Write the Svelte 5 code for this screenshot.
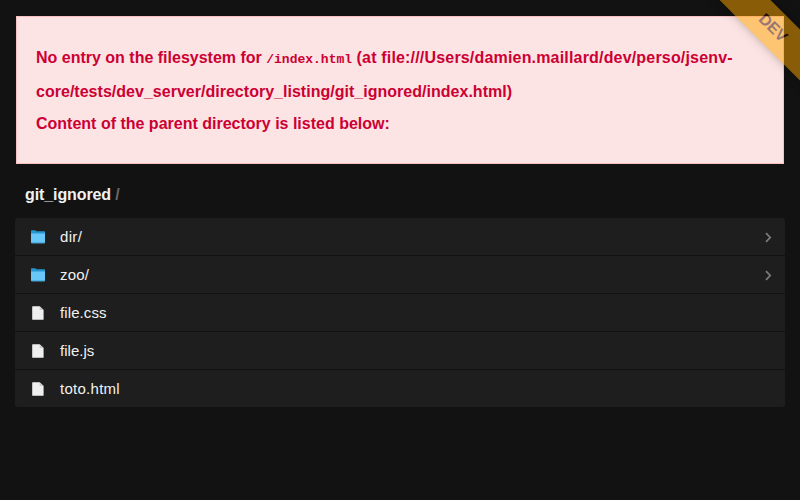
<script>
  const entries = [
    { name: 'dir/', dir: true, spacing: 0.35 },
    { name: 'zoo/', dir: true, spacing: 0.2 },
    { name: 'file.css', dir: false, spacing: 0.1 },
    { name: 'file.js', dir: false, spacing: 0.02 },
    { name: 'toto.html', dir: false, spacing: 0.27 }
  ];
</script>

<div class="page">
  <div class="error">
    <p class="line">No entry on the filesystem for <code>/index.html</code> <span class="location">(at file:///Users/damien.maillard/dev/perso/jsenv-</span></p>
    <p class="line second">core/tests/dev_server/directory_listing/git_ignored/index.html)</p>
    <p class="line third">Content of the parent directory is listed below:</p>
  </div>
  <h1>git_ignored <span>/</span></h1>
  <ul>
    {#each entries as entry}
      <li>
        {#if entry.dir}
          <svg class="icon" width="16" height="16" viewBox="0 0 16 16">
            <path d="M1 4V2q0-.7.7-.7h3.5q.4 0 .7.4l.5.6H14.4q.6 0 .6.6V7H1z" fill="#2596d1" />
            <path d="M1 4.6h14v9q0 .7-.7.7H1.7q-.7 0-.7-.7z" fill="#6ac8f8" />
            <path d="M1 13.2h14v.4q0 .7-.7.7H1.7q-.7 0-.7-.7z" fill="#43a9dc" />
          </svg>
        {:else}
          <svg class="icon" width="16" height="16" viewBox="0 0 16 16">
            <path d="M2.7 1.2h7L13.6 5v9.2q0 .6-.6.6H2.8q-.6 0-.6-.6V1.8q0-.6.5-.6z" fill="#efefef" />
            <path d="M9.6 1.2 13.6 5H10.2q-.6 0-.6-.6z" fill="#c9c9c9" />
          </svg>
        {/if}
        <span class="name" style:letter-spacing="{entry.spacing}px">{entry.name}</span>
        {#if entry.dir}
          <svg class="chevron" width="10" height="12" viewBox="0 0 10 12">
            <path d="M3 2.1 7.2 6.5 3 10.9" fill="none" stroke="#7c7c7c" stroke-width="1.7" />
          </svg>
        {/if}
      </li>
    {/each}
  </ul>
  <div class="corner"><div class="ribbon">DEV</div></div>
</div>

<style>
  :global(body) {
    margin: 0;
    background: #121212;
  }
  .page {
    position: relative;
    box-sizing: border-box;
    height: 500px;
    padding: 16px 15px 0;
    overflow: hidden;
    background: #121212;
    color: #f1f1f1;
    font-family: 'Liberation Sans', Arial, sans-serif;
    font-size: 16px;
  }
  .error {
    box-sizing: border-box;
    height: 148px;
    margin: 0 1px;
    padding: 24px 19px;
    border: 1px solid #fcbfbf;
    background: #fce4e4;
    color: #cc0033;
    font-weight: bold;
  }
  .line {
    margin: 0;
    line-height: 34px;
    white-space: nowrap;
  }
  .location {
    letter-spacing: 0.18px;
  }
  .second {
    letter-spacing: 0.02px;
  }
  .third {
    line-height: 30px;
  }
  code {
    font: bold 13px 'Liberation Mono', 'Courier New', monospace;
  }
  h1 {
    margin: 20px 0 0 10px;
    font-size: 16px;
    line-height: 22px;
    letter-spacing: -0.1px;
  }
  h1 span {
    color: #696969;
  }
  ul {
    display: flex;
    flex-direction: column;
    gap: 1px;
    margin: 12px 0 0;
    padding: 0;
    overflow: hidden;
    border-radius: 3px;
    list-style: none;
  }
  li {
    display: flex;
    align-items: center;
    height: 37px;
    padding: 0 12px 0 15px;
    background: #1e1e1e;
    font-size: 15px;
  }
  .name {
    margin-left: 14px;
  }
  .chevron {
    margin-left: auto;
  }
  .corner {
    position: absolute;
    top: 0;
    right: 0;
    width: 100px;
    height: 100px;
    overflow: hidden;
    opacity: 0.5;
  }
  .ribbon {
    position: absolute;
    top: 9.5px;
    right: -97.5px;
    width: 250px;
    height: 36px;
    transform: rotate(45deg);
    background: orange;
    box-shadow: 0 0 10px rgba(0, 0, 0, 0.5);
    color: rgb(55, 7, 7);
    font-weight: bold;
    line-height: 36px;
    text-align: center;
  }
</style>
